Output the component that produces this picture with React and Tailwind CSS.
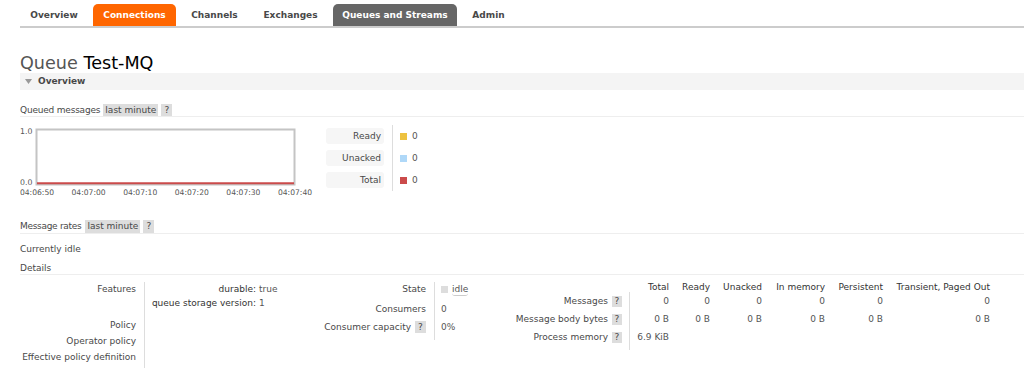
import React from "react";

function Nav() {
  const tabs = [
    { label: "Overview", w: "w-[68px]", cls: "text-[#484848]" },
    { label: "Connections", w: "w-[83px]", cls: "bg-[#ff6600] text-white" },
    { label: "Channels", w: "w-[67px]", cls: "text-[#484848]" },
    { label: "Exchanges", w: "w-[75px]", cls: "text-[#484848]" },
    { label: "Queues and Streams", w: "w-[124px]", cls: "bg-[#666666] text-white" },
    { label: "Admin", w: "w-[53px]", cls: "text-[#484848]" },
  ];
  return (
    <div className="pl-[20px] pt-[4px]">
      <div className="flex gap-[5px] border-b-2 border-[#cccccc]">
        {tabs.map((t) => (
          <div
            key={t.label}
            className={`${t.w} ${t.cls} h-[22px] flex items-center justify-center font-bold rounded-t-[5px]`}
          >
            {t.label}
          </div>
        ))}
      </div>
    </div>
  );
}

function Badge({ children, className }) {
  return (
    <span
      className={`inline-flex items-center justify-center bg-[#dddddd] text-[#484848] ${className}`}
    >
      {children}
    </span>
  );
}

function Chart() {
  const xs = [
    ["04:06:50", 17],
    ["04:07:00", 68.6],
    ["04:07:10", 120.2],
    ["04:07:20", 171.8],
    ["04:07:30", 223.4],
    ["04:07:40", 275],
  ];
  return (
    <svg width="300" height="75" viewBox="0 0 300 75" className="block">
      <rect x="16.5" y="4.5" width="258" height="55" fill="#fff" stroke="#c4c4c4" strokeWidth="2" />
      <line x1="17" y1="58.2" x2="274" y2="58.2" stroke="#cb4b4b" strokeWidth="2" />
      <text x="0" y="9" fontSize="7.8" fill="#555" fontFamily="DejaVu Sans, Verdana, sans-serif">1.0</text>
      <text x="0" y="60" fontSize="7.8" fill="#555" fontFamily="DejaVu Sans, Verdana, sans-serif">0.0</text>
      {xs.map(([t, x]) => (
        <text
          key={t}
          x={x}
          y="70"
          fontSize="7.6"
          fill="#555"
          textAnchor="middle"
          fontFamily="DejaVu Sans, Verdana, sans-serif"
        >
          {t}
        </text>
      ))}
    </svg>
  );
}

function Legend() {
  const rows = [
    ["Ready", "bg-[#edc240]"],
    ["Unacked", "bg-[#afd8f8]"],
    ["Total", "bg-[#cb4b4b]"],
  ];
  return (
    <div className="flex ml-[6px]">
      <div className="flex flex-col pt-[3px] gap-[6px] w-[58px]">
        {rows.map(([l]) => (
          <div key={l} className="h-[16px] bg-[#f6f6f6] rounded-[3px] flex items-center justify-end pr-[3px]">
            {l}
          </div>
        ))}
      </div>
      <div className="ml-[8px] w-px h-[66px] bg-[#dddddd]" />
      <div className="flex flex-col pt-[3px] gap-[6px] pl-[7px]">
        {rows.map(([l, c]) => (
          <div key={l} className="h-[16px] flex items-center">
            <span className={`w-[7px] h-[7px] ${c}`} />
            <span className="ml-[5px] text-[#555555]">0</span>
          </div>
        ))}
      </div>
    </div>
  );
}

function Details() {
  const cols = ["w-[39px]", "w-[41px]", "w-[52px]", "w-[63px]", "w-[58px]", "w-[107px]"];
  const header = ["Total", "Ready", "Unacked", "In memory", "Persistent", "Transient, Paged Out"];
  const msgs = ["0", "0", "0", "0", "0", "0"];
  const bytes = ["0 B", "0 B", "0 B", "0 B", "0 B", "0 B"];
  const Row = ({ label, values, badge = true }) => (
    <div className="flex h-[18px]">
      <div className="w-[135px] border-r border-[#dddddd] pr-[7px] flex items-center justify-end">
        {label}
        {badge && <Badge className="ml-[4px] w-[10px] h-[11px]">?</Badge>}
      </div>
      {values.map((v, i) => (
        <div key={i} className={`${cols[i]} flex items-center justify-end text-[#555555]`}>
          {v}
        </div>
      ))}
    </div>
  );
  return (
    <div className="flex mt-[7px]">
      {/* left block */}
      <div className="w-[280px] flex">
        <div className="w-[125px] pr-[8px] border-r border-[#dddddd] flex flex-col items-end pb-[3px]">
          <div className="h-[14px] flex items-center">Features</div>
          <div className="h-[22px]" />
          <div className="h-[15px] flex items-center">Policy</div>
          <div className="h-[16px] flex items-center">Operator policy</div>
          <div className="h-[16px] flex items-center">Effective policy definition</div>
        </div>
        <div className="flex flex-col">
          <div className="h-[14px] flex items-center">
            <span className="w-[111px] text-right text-[#333333]">durable:</span>
            <span className="ml-[3px] text-[#555555]">true</span>
          </div>
          <div className="h-[14px] flex items-center">
            <span className="w-[111px] text-right text-[#333333]">queue storage version:</span>
            <span className="ml-[3px] text-[#555555]">1</span>
          </div>
        </div>
      </div>
      {/* middle block */}
      <div className="flex self-start">
        <div className="w-[135px] pr-[8px] border-r border-[#dddddd] flex flex-col items-end pb-[6px]">
          <div className="h-[14px] flex items-center">State</div>
          <div className="h-[14px] mt-[6px] flex items-center">Consumers</div>
          <div className="h-[14px] mt-[4px] flex items-center">
            Consumer capacity
            <Badge className="ml-[4px] w-[11px] h-[12px]">?</Badge>
          </div>
        </div>
        <div className="w-[60px] pl-[6px] flex flex-col text-[#555555]">
          <div className="h-[14px] flex items-center">
            <span className="w-[7px] h-[7px] bg-[#dddddd]" />
            <span className="ml-[4px] border-b border-[#cccccc] rounded-b-[3px] pb-[1px] mt-[2px]">idle</span>
          </div>
          <div className="h-[14px] mt-[6px] flex items-center">0</div>
          <div className="h-[14px] mt-[4px] flex items-center">0%</div>
        </div>
      </div>
      {/* right block */}
      <div className="flex flex-col self-start">
        <div className="flex h-[10px] items-center">
          <div className="w-[135px]" />
          {header.map((h, i) => (
            <div key={h} className={`${cols[i]} text-right text-[#333333]`}>
              {h}
            </div>
          ))}
        </div>
        <Row label="Messages" values={msgs} />
        <Row label="Message body bytes" values={bytes} />
        <Row label="Process memory" values={["6.9 KiB"]} />
        <div className="w-[135px] h-[4px] border-r border-[#dddddd]" />
      </div>
    </div>
  );
}

export default function App() {
  return (
    <div className="w-[1024px] h-[374px] overflow-hidden bg-white text-[9px] leading-none text-[#484848] font-[family-name:DejaVu_Sans,Verdana,sans-serif]">
      <Nav />
      <div className="pl-[20px]">
        <h1 className="mt-[26px] h-[19px] leading-[19px] text-[17.6px] font-normal">
          <span className="text-[#555555]">Queue</span>{" "}
          <span className="text-black">Test-MQ</span>
        </h1>
        <div className="h-[17px] bg-[#f4f4f4] flex items-center pl-[5px]">
          <svg width="7" height="5" viewBox="0 0 7 5" className="block">
            <polygon points="0,0 7,0 3.5,5" fill="#999999" />
          </svg>
          <span className="ml-[6px] font-bold">Overview</span>
        </div>

        <div className="mt-[14px] h-[13px] flex items-center border-b border-[#eeeeee]">
          <span className="tracking-[-0.2px]">Queued messages</span>
          <Badge className="ml-[3px] w-[55px] h-[12px]">last minute</Badge>
          <Badge className="ml-[3px] w-[11px] h-[12px]">?</Badge>
        </div>

        <div className="mt-[8px] flex">
          <Chart />
          <Legend />
        </div>

        <div className="mt-[20px] h-[14px] flex items-center border-b border-[#eeeeee]">
          <span className="tracking-[-0.3px]">Message rates</span>
          <Badge className="ml-[4px] w-[55px] h-[13px]">last minute</Badge>
          <Badge className="ml-[3px] w-[11px] h-[13px]">?</Badge>
        </div>

        <div className="mt-[9px] h-[12px] flex items-center">Currently idle</div>
        <div className="mt-[7px] h-[13px] flex items-center border-b border-[#eeeeee]">Details</div>
      </div>
      <div className="pl-[20px]">
        <Details />
      </div>
    </div>
  );
}
